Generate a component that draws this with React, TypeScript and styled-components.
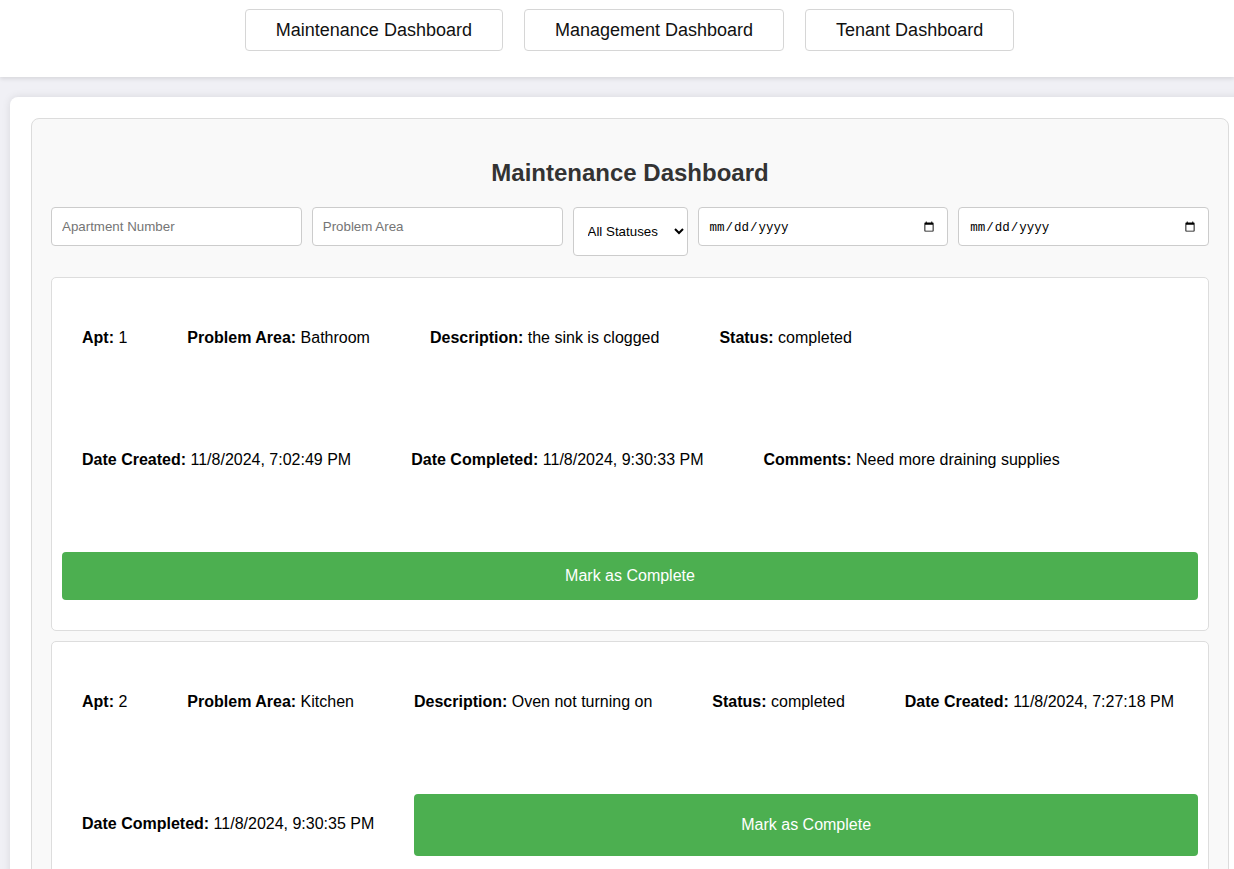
import React from "react";
import styled, { createGlobalStyle } from "styled-components";

const GlobalStyle = createGlobalStyle`
  html, body {
    margin: 0;
    padding: 0;
    overflow: hidden;
  }
  body {
    background: #f0f0f5;
    font-family: "Liberation Sans", Arial, sans-serif;
    color: #000;
  }
  * { box-sizing: border-box; }
`;

const NavBar = styled.header`
  height: 77px;
  background: #ffffff;
  box-shadow: 0 2px 4px rgba(0, 0, 0, 0.1);
  display: flex;
  justify-content: center;
  align-items: flex-start;
  gap: 21px;
  padding: 9px 0 0 25px;
  position: relative;
  z-index: 1;
`;

const NavButton = styled.button`
  font-family: "Liberation Sans", Arial, sans-serif;
  font-size: 18px;
  color: #111;
  background: #ffffff;
  border: 1px solid #d6d6d6;
  border-radius: 4px;
  padding: 10px 30px;
  line-height: 20px;
  cursor: pointer;
`;

const Main = styled.main`
  padding: 20px 0 0 10px;
`;

const Container = styled.div`
  box-sizing: content-box;
  width: 1198px;
  padding: 21px;
  background: #ffffff;
  border-radius: 8px;
  box-shadow: 0 0 8px rgba(0, 0, 0, 0.1);
`;

const Panel = styled.section`
  background: #f9f9f9;
  border: 1px solid #dcdcdc;
  border-radius: 8px;
  padding: 19px;
`;

const Title = styled.h2`
  margin: 21px 0 20px;
  font-size: 24px;
  line-height: 28px;
  font-weight: bold;
  color: #333;
  text-align: center;
`;

const FilterRow = styled.div`
  display: flex;
  align-items: flex-start;
  gap: 10px;
  margin-bottom: 21px;
`;

const TextInput = styled.input`
  flex: 1 1 0;
  min-width: 0;
  height: 39px;
  padding: 0 10px;
  border: 1px solid #cccccc;
  border-radius: 4px;
  background: #fff;
  font-family: "Liberation Sans", Arial, sans-serif;
  font-size: 13.333px;
  color: #000;
  &::placeholder {
    color: #757575;
  }
`;

const DateInput = styled(TextInput)`
  font-family: "Liberation Mono", "DejaVu Sans Mono", monospace;
  font-size: 12.5px;
  padding: 2px 10px 0;
`;

const StatusSelect = styled.select`
  flex: 0 0 115px;
  height: 49px;
  padding: 0 6px 0 10px;
  border: 1px solid #cccccc;
  border-radius: 4px;
  background: #fff;
  font-family: "Liberation Sans", Arial, sans-serif;
  font-size: 13.333px;
  color: #000;
`;

const Card = styled.article`
  background: #ffffff;
  border: 1px solid #dddddd;
  border-radius: 5px;
  padding: 10px;
  margin-bottom: 10px;
  display: flex;
  flex-wrap: wrap;
  gap: 20px;
`;

const Field = styled.p`
  margin: 0;
  padding: 39px 20px 41px;
  font-size: 16px;
  line-height: 22px;
  color: #000;
  white-space: nowrap;
`;

const Label = styled.strong`
  font-weight: bold;
`;

const CompleteButton = styled.button`
  flex: 1 1 200px;
  margin: 20px 0;
  padding: 15px;
  border: none;
  border-radius: 4px;
  background: #4caf50;
  color: #ffffff;
  font-family: "Liberation Sans", Arial, sans-serif;
  font-size: 16px;
  line-height: 18px;
  cursor: pointer;
`;

type Request = {
  apt: string;
  area: string;
  description: string;
  status: string;
  created: string;
  completed: string;
  comments?: string;
};

const requests: Request[] = [
  {
    apt: "1",
    area: "Bathroom",
    description: "the sink is clogged",
    status: "completed",
    created: "11/8/2024, 7:02:49 PM",
    completed: "11/8/2024, 9:30:33 PM",
    comments: "Need more draining supplies",
  },
  {
    apt: "2",
    area: "Kitchen",
    description: "Oven not turning on",
    status: "completed",
    created: "11/8/2024, 7:27:18 PM",
    completed: "11/8/2024, 9:30:35 PM",
  },
];

const FieldItem = ({ label, value }: { label: string; value: string }) => (
  <Field>
    <Label>{label}:</Label> {value}
  </Field>
);

export default function App() {
  return (
    <>
      <GlobalStyle />
      <NavBar>
        <NavButton>Maintenance Dashboard</NavButton>
        <NavButton>Management Dashboard</NavButton>
        <NavButton>Tenant Dashboard</NavButton>
      </NavBar>
      <Main>
        <Container>
          <Panel>
            <Title>Maintenance Dashboard</Title>
            <FilterRow>
              <TextInput placeholder="Apartment Number" />
              <TextInput placeholder="Problem Area" />
              <StatusSelect defaultValue="">
                <option value="">All Statuses</option>
                <option value="pending">pending</option>
                <option value="completed">completed</option>
              </StatusSelect>
              <DateInput type="date" />
              <DateInput type="date" />
            </FilterRow>
            {requests.map((r) => (
              <Card key={r.apt}>
                <FieldItem label="Apt" value={r.apt} />
                <FieldItem label="Problem Area" value={r.area} />
                <FieldItem label="Description" value={r.description} />
                <FieldItem label="Status" value={r.status} />
                <FieldItem label="Date Created" value={r.created} />
                <FieldItem label="Date Completed" value={r.completed} />
                {r.comments && <FieldItem label="Comments" value={r.comments} />}
                <CompleteButton>Mark as Complete</CompleteButton>
              </Card>
            ))}
          </Panel>
        </Container>
      </Main>
    </>
  );
}
